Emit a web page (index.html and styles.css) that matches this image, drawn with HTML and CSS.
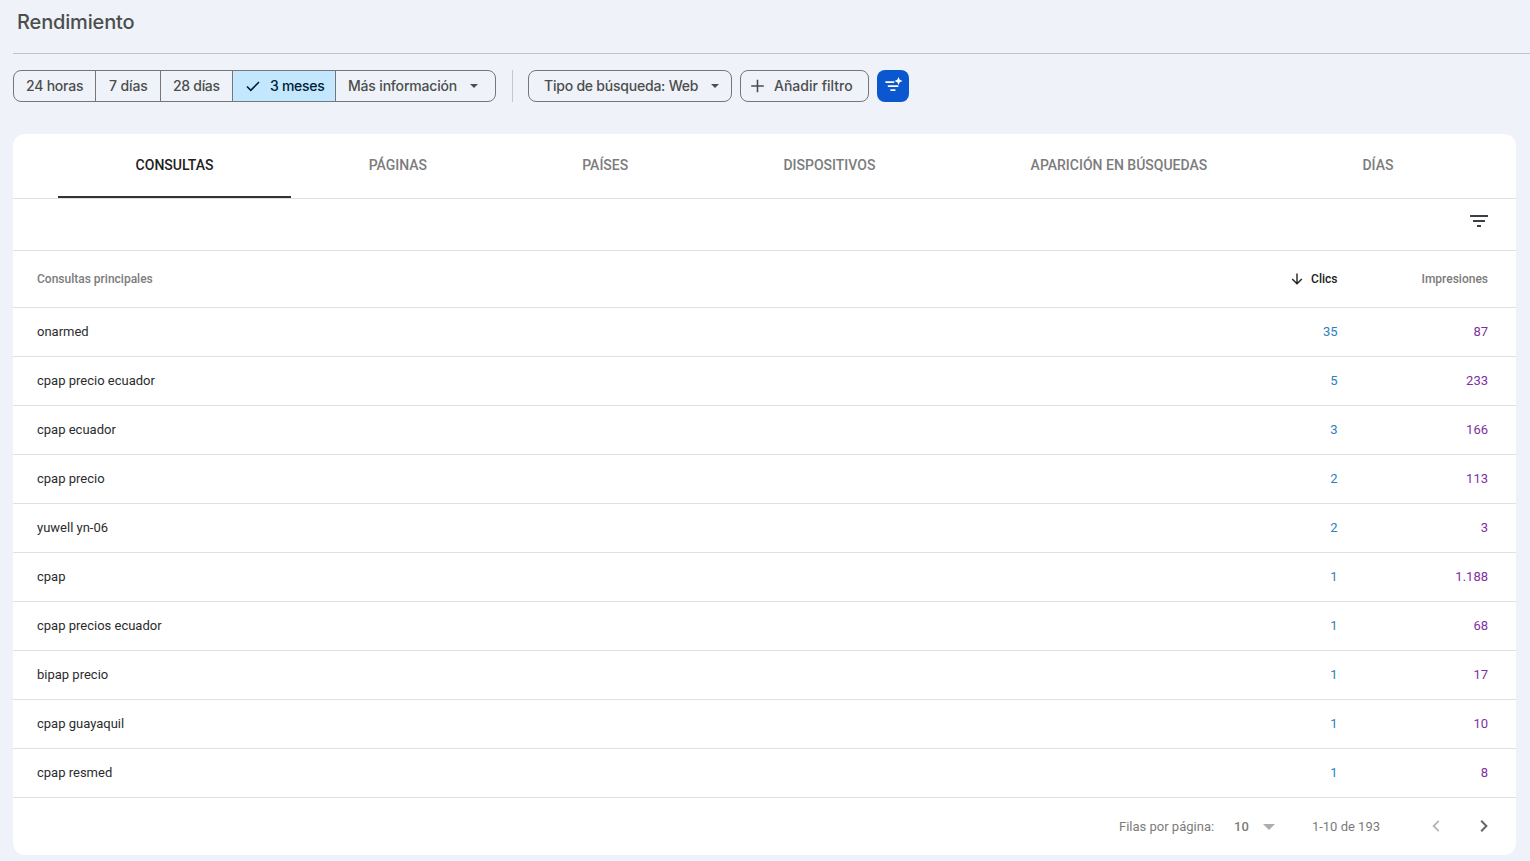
FILE: index.html
```html
<!DOCTYPE html>
<html lang="es">
<head>
  <meta charset="UTF-8">
  <title>Rendimiento</title>
  <meta name="viewport" content="width=device-width, initial-scale=1.0">
  <link rel="stylesheet" href="styles.css">
</head>
<body>

  <header class="page-header">
    <h1>Rendimiento</h1>
  </header>

  <div class="toolbar">
    <div class="segments">
      <button class="seg-24h"><span>24 horas</span></button>
      <button class="seg-7d"><span>7 días</span></button>
      <button class="seg-28d"><span>28 días</span></button>
      <button class="seg-3m selected">
        <svg width="18" height="18" viewBox="0 0 18 18"><path d="M3 9.5l3.8 3.8L15 5" fill="none" stroke="currentColor" stroke-width="1.6"/></svg>
        <span>3 meses</span>
      </button>
      <button class="seg-more">
        <span>Más información</span>
        <svg width="8" height="4" viewBox="0 0 8 4"><path d="M0 0h8L4 4z" fill="currentColor"/></svg>
      </button>
    </div>
    <div class="divider"></div>
    <button class="chip chip-type">
      <span>Tipo de búsqueda: Web</span>
      <svg width="8" height="4" viewBox="0 0 8 4"><path d="M0 0h8L4 4z" fill="currentColor"/></svg>
    </button>
    <button class="chip chip-add">
      <svg width="14" height="14" viewBox="0 0 14 14"><path d="M6.5 .7v12.6M.2 7h12.6" stroke="currentColor" stroke-width="1.6"/></svg>
      <span>Añadir filtro</span>
    </button>
    <button class="ai-button" aria-label="Filtro con IA">
      <svg width="32" height="32" viewBox="0 0 32 32" fill="#fff">
        <path d="M8.4 11.2h8.8V13H8.4zM10.8 15.2h10.6V17H10.8zM13.4 19.3h5V21h-5z"/>
        <path d="M21.5 6.9l1.2 2.9 2.9 1.2-2.9 1.2-1.2 2.9-1.2-2.9-2.9-1.2 2.9-1.2z"/>
      </svg>
    </button>
  </div>

  <main class="card">
    <nav class="tabs">
      <a class="active">CONSULTAS</a>
      <a>PÁGINAS</a>
      <a>PAÍSES</a>
      <a>DISPOSITIVOS</a>
      <a>APARICIÓN EN BÚSQUEDAS</a>
      <a>DÍAS</a>
    </nav>

    <div class="filter-row">
      <svg width="18" height="12" viewBox="0 0 18 12"><path d="M0 0h18v2H0zM3 5h12v2H3zM7 10h4v2H7z" fill="#3c4043"/></svg>
    </div>

    <table>
      <thead>
        <tr>
          <th class="query">Consultas principales</th>
          <th class="clicks">
            <svg width="12" height="12" viewBox="0 0 12 12"><path d="M6 .5v10M1.2 6L6 10.8 10.8 6" fill="none" stroke="currentColor" stroke-width="1.4"/></svg>Clics
          </th>
          <th class="impressions">Impresiones</th>
        </tr>
      </thead>
      <tbody>
        <tr><td>onarmed</td><td>35</td><td>87</td></tr>
        <tr><td>cpap precio ecuador</td><td>5</td><td>233</td></tr>
        <tr><td>cpap ecuador</td><td>3</td><td>166</td></tr>
        <tr><td>cpap precio</td><td>2</td><td>113</td></tr>
        <tr><td>yuwell yn-06</td><td>2</td><td>3</td></tr>
        <tr><td>cpap</td><td>1</td><td>1.188</td></tr>
        <tr><td>cpap precios ecuador</td><td>1</td><td>68</td></tr>
        <tr><td>bipap precio</td><td>1</td><td>17</td></tr>
        <tr><td>cpap guayaquil</td><td>1</td><td>10</td></tr>
        <tr><td>cpap resmed</td><td>1</td><td>8</td></tr>
      </tbody>
    </table>

    <footer class="pagination">
      <span class="label">Filas por página:</span>
      <span class="size">10</span>
      <svg class="caret" width="12" height="6" viewBox="0 0 12 6"><path d="M0 0h12L6 6z" fill="#adadad"/></svg>
      <span class="range">1-10 de 193</span>
      <svg class="prev" width="8" height="12" viewBox="0 0 8 12"><path d="M6.8.8L1.6 6l5.2 5.2" fill="none" stroke="#b5b5b5" stroke-width="1.8"/></svg>
      <svg class="next" width="8" height="12" viewBox="0 0 8 12"><path d="M1.2.8L6.4 6l-5.2 5.2" fill="none" stroke="#666" stroke-width="2"/></svg>
    </footer>
  </main>

</body>
</html>
```
FILE: styles.css
```css
* {
  box-sizing: border-box;
}

body {
  margin: 0;
  height: 861px;
  overflow: hidden;
  background: #eff3f9;
  font-family: Roboto, sans-serif;
  color: #2b2c2e;
}

svg {
  display: block;
  flex: none;
}

.page-header {
  height: 54px;
  margin-left: 13px;
  padding: 10px 0 0 4px;
  border-bottom: 1px solid #c0c5ca;
}

h1 {
  margin: 0;
  font-family: Inter, sans-serif;
  font-size: 20px;
  font-weight: 450;
  line-height: 24px;
  letter-spacing: -0.15px;
  color: #4b4e4d;
}

.toolbar {
  display: flex;
  height: 32px;
  margin: 16px 0 32px 13px;
}

button {
  display: flex;
  align-items: center;
  height: 32px;
  margin: 0;
  padding: 0;
  border: none;
  background: none;
  font-family: Inter, sans-serif;
  font-size: 14px;
  font-weight: 500;
  letter-spacing: -0.22px;
  color: #4b4e4d;
  white-space: nowrap;
}

button span {
  padding-bottom: 2px;
}

.segments {
  display: flex;
  width: 483px;
  border: 1px solid #747775;
  border-radius: 8px;
  overflow: hidden;
}

.segments button {
  height: 30px;
  padding-left: 12px;
  border-right: 1px solid #747775;
}

.segments .seg-24h { width: 82px; }
.segments .seg-7d { width: 65px; padding-left: 13px; letter-spacing: -0.1px; }
.segments .seg-28d { width: 72px; letter-spacing: -0.3px; }
.segments .seg-3m { width: 103px; gap: 8px; padding-left: 11px; letter-spacing: -0.3px; }
.segments .seg-more { flex: 1; gap: 13px; border-right: none; letter-spacing: -0.18px; }

.segments .selected {
  background: #c2e7ff;
  color: #001d35;
}

.divider {
  width: 1px;
  margin: 0 15px 0 16px;
  background: #c4c7c5;
}

.chip {
  margin-right: 8px;
  border: 1px solid #747775;
  border-radius: 8px;
}

.chip-type {
  width: 204px;
  gap: 13px;
  padding-left: 15px;
}

.chip-add {
  width: 129px;
  gap: 9px;
  padding-left: 10px;
  letter-spacing: 0;
}

.ai-button {
  width: 32px;
  border-radius: 8px;
  background: #0b57d0;
}

.card {
  width: 1503px;
  height: 721px;
  margin-left: 13px;
  border-radius: 12px;
  background: #fff;
}

.tabs {
  display: flex;
  height: 65px;
  padding: 0 45px;
  border-bottom: 1px solid #e0e0e0;
}

.tabs a {
  flex: 1 1 auto;
  height: 64px;
  border-bottom: 2px solid transparent;
  font-size: 14px;
  font-weight: 500;
  line-height: 62px;
  text-align: center;
  color: #7c7c7c;
}

.tabs .active {
  border-color: #303334;
  color: #212121;
}

.filter-row {
  display: flex;
  justify-content: flex-end;
  height: 52px;
  padding: 16px 28px 0 0;
  border-bottom: 1px solid #e0e0e0;
}

table {
  width: 100%;
  border-collapse: separate;
  border-spacing: 0;
  table-layout: fixed;
}

th, td {
  padding: 0 28px 0 24px;
  border-bottom: 1px solid #e0e0e0;
  text-align: right;
}

th {
  height: 57px;
  font-size: 12px;
  font-weight: 500;
  color: #7c7c7c;
}

td {
  height: 49px;
  padding-bottom: 2px;
  font-size: 13px;
}

th:first-child, td:first-child {
  text-align: left;
}

.clicks {
  width: 161px;
  color: #212121;
}

.clicks svg {
  display: inline-block;
  margin-right: 8px;
  vertical-align: -2px;
}

.impressions {
  width: 151px;
}

td:nth-child(2) {
  color: #2c80bd;
}

td:nth-child(3) {
  color: #812fa0;
}

th:nth-child(2), td:nth-child(2) {
  padding-right: 27.5px;
}

.pagination {
  display: flex;
  align-items: center;
  justify-content: flex-end;
  height: 57px;
  padding-right: 28px;
  font-size: 13px;
  color: #7c7c7c;
}

.size {
  margin-left: 20px;
  font-weight: 500;
}

.caret {
  margin-left: 14px;
}

.range {
  margin-left: 37px;
}

.prev {
  margin-left: 52px;
}

.next {
  margin-left: 40px;
}

.prev, .next {
  margin-bottom: 2px;
}
```
